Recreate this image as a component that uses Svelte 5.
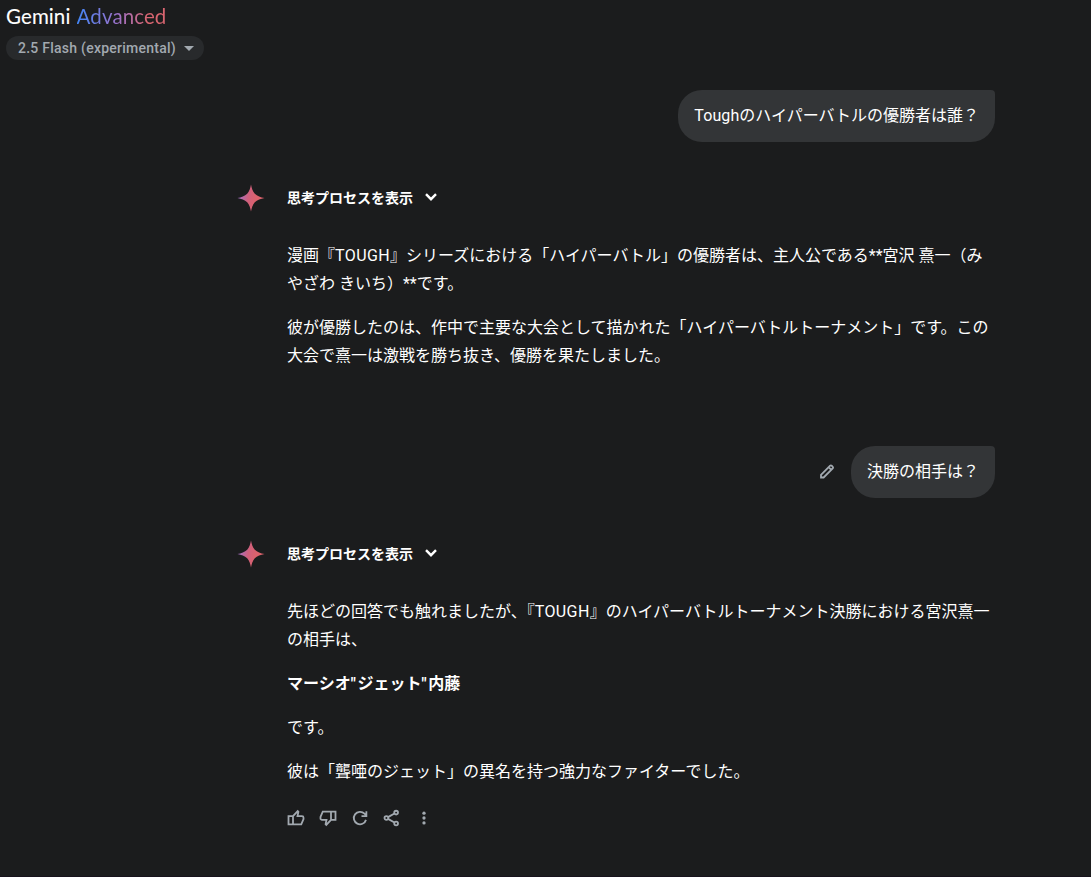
<script>
  const turns = [
    {
      question: 'Toughのハイパーバトルの優勝者は誰？',
      editable: false,
      answer: [
        { text: '漫画『TOUGH』シリーズにおける「ハイパーバトル」の優勝者は、主人公である**宮沢 熹一（みやざわ きいち）**です。' },
        { text: '彼が優勝したのは、作中で主要な大会として描かれた「ハイパーバトルトーナメント」です。この大会で熹一は激戦を勝ち抜き、優勝を果たしました。' }
      ]
    },
    {
      question: '決勝の相手は？',
      editable: true,
      answer: [
        { text: '先ほどの回答でも触れましたが、『TOUGH』のハイパーバトルトーナメント決勝における宮沢熹一の相手は、' },
        { text: 'マーシオ"ジェット"内藤', bold: true },
        { text: 'です。' },
        { text: '彼は「聾唖のジェット」の異名を持つ強力なファイターでした。' }
      ]
    }
  ]

  // odd entries are the latin runs
  const runs = (text) => text.split(/([A-Za-z]+|")/)
</script>

{#snippet mixed(text)}
  {#each runs(text) as run, n}{#if n % 2}<span class="latin" class:quote={run === '"'}>{run}</span>{:else}{run}{/if}{/each}
{/snippet}

<div class="app">
  <header>
    <div class="brand">Gemini <span>Advanced</span></div>
    <button class="model">
      2.5 Flash (experimental)
      <svg width="10" height="5" viewBox="0 0 10 5"><path d="M0 0h10L5 5z" fill="currentColor" /></svg>
    </button>
  </header>

  <main>
    {#each turns as turn, i}
      <section class="turn">
        <div class="query">
          {#if turn.editable}
            <button class="edit" aria-label="編集">
              <svg width="18" height="18" viewBox="0 0 24 24">
                <path d="M4 19.300v-3.500L16.200 3.600a1.400 1.400 0 0 1 2 0l1.500 1.500a1.400 1.400 0 0 1 0 2L7.500 19.300zM14.200 5.600l3.500 3.500" />
              </svg>
            </button>
          {/if}
          <div class="bubble">{@render mixed(turn.question)}</div>
        </div>

        <div class="response">
          <svg class="spark" width="28" height="28" viewBox="0 0 28 28">
            <defs>
              <linearGradient id="spark-{i}" x1="0" y1="0.4" x2="1" y2="0.6">
                <stop offset="0" stop-color="#9b72cb" />
                <stop offset="0.4" stop-color="#d0607c" />
                <stop offset="0.7" stop-color="#dc626c" />
              </linearGradient>
            </defs>
            <path
              fill="url(#spark-{i})"
              d="M14 .5C14.6 4 15.6 7.200 17.800 9.700 20.200 12 23.700 13.300 27.500 14 23.700 14.700 20.200 16 17.800 18.300 15.600 20.800 14.600 24 14 27.500 13.400 24 12.400 20.800 10.200 18.300 7.800 16 4.300 14.700.5 14 4.300 13.300 7.800 12 10.200 9.700 12.400 7.200 13.400 4 14 .5z"
            />
          </svg>

          <div class="content">
            <button class="thoughts">
              思考プロセスを表示
              <svg width="12" height="8" viewBox="0 0 12 8"><path d="M1 1.200l5 5 5-5" /></svg>
            </button>

            <div class="answer">
              {#each turn.answer as line}
                <p class:bold={line.bold}>{@render mixed(line.text)}</p>
              {/each}
            </div>

            {#if i === turns.length - 1}
              <div class="actions">
                <button aria-label="良い回答">
                  <svg viewBox="0 0 24 24">
                    <path d="M8 20.500H2V9.500h6zM8 9.500L14.300 2.800l.9.9L14 9.500h6a2 2 0 0 1 2 2v2l-3 7H8" />
                  </svg>
                </button>
                <button aria-label="悪い回答">
                  <svg viewBox="0 0 24 24">
                    <path d="M16 3.500h6v11h-6zM16 14.500l-6.300 6.700-.9-.9L10 14.500H4a2 2 0 0 1-2-2v-2l3-7h11" />
                  </svg>
                </button>
                <button aria-label="やり直す">
                  <svg viewBox="0 0 24 24">
                    <path d="M20 14.500A8.300 8.300 0 1 1 18 6.300L20.500 8.800M20.500 3v6.500H14" />
                  </svg>
                </button>
                <button aria-label="共有">
                  <svg viewBox="0 0 24 24">
                    <circle cx="17.500" cy="4.800" r="2.500" />
                    <circle cx="4.500" cy="12" r="2.500" />
                    <circle cx="17.500" cy="19.200" r="2.500" />
                    <path d="M6.700 10.800l8.600-4.800M6.700 13.200l8.600 4.800" />
                  </svg>
                </button>
                <button aria-label="その他">
                  <svg class="dots" viewBox="0 0 24 24">
                    <circle cx="12" cy="5.500" r="2.200" />
                    <circle cx="12" cy="12" r="2.200" />
                    <circle cx="12" cy="18.500" r="2.200" />
                  </svg>
                </button>
              </div>
            {/if}
          </div>
        </div>
      </section>
    {/each}
  </main>
</div>

<style>
  :global(body) {
    background: #1b1c1d;
  }

  .app {
    box-sizing: border-box;
    height: 877px;
    overflow: hidden;
    border-bottom: 1px solid #17121c;
    color: #fff;
    font-family: Roboto, 'Noto Sans CJK JP', sans-serif;
  }

  button {
    padding: 0;
    border: 0;
    background: none;
    color: inherit;
    font: inherit;
  }

  svg {
    display: block;
    flex: none;
  }

  header {
    height: 90px;
    padding-left: 6px;
    box-sizing: border-box;
  }

  .brand {
    height: 36px;
    line-height: 32px;
    font-family: Lato, sans-serif;
    font-size: 20.5px;
    letter-spacing: 0.1px;
    word-spacing: 1.5px;
    -webkit-text-stroke: 0.1px;
  }

  .brand span {
    background: linear-gradient(90deg, #4285f4 0%, #9b72cb 45%, #d96570 80%);
    background-clip: text;
    color: transparent;
    letter-spacing: 0.1px;
    -webkit-text-stroke: 0;
  }

  .model {
    display: flex;
    align-items: center;
    gap: 8px;
    height: 24px;
    padding: 0 10px 0 12px;
    border-radius: 12px;
    background: #282a2c;
    color: #a2a9b0;
    font-size: 14px;
    font-weight: 500;
    letter-spacing: 0.25px;
  }

  main {
    width: 758px;
    margin-left: 237px;
  }

  .turn {
    height: 356px;
  }

  .query {
    display: flex;
    justify-content: flex-end;
    align-items: center;
  }

  .bubble {
    padding: 12px 16px;
    border-radius: 24px 4px 24px 24px;
    background: #333537;
    font-size: 16px;
    line-height: 28px;
  }

  .bubble .latin {
    letter-spacing: 0.1px;
  }

  .edit {
    margin-right: 15px;
    color: #a2a9b0;
  }

  .edit path,
  .actions path,
  .actions circle {
    fill: none;
    stroke: currentColor;
    stroke-width: 2.4;
  }

  .response {
    display: flex;
    gap: 22px;
    margin-top: 42px;
  }

  .content {
    flex: 1;
  }

  .thoughts {
    display: flex;
    align-items: center;
    gap: 12px;
    height: 26px;
    font-size: 14px;
    font-weight: 700;
  }

  .thoughts path {
    fill: none;
    stroke: currentColor;
    stroke-width: 2.4;
  }

  .answer {
    width: 708px;
    margin-top: 32px;
    font-size: 16px;
    line-height: 28px;
  }

  .answer .latin {
    letter-spacing: 0.4px;
  }

  .answer .quote {
    letter-spacing: 1.7px;
  }

  p {
    margin: 0 0 16px;
  }

  .bold {
    font-weight: 700;
  }

  .actions {
    display: flex;
    gap: 14px;
    margin-top: 23px;
    color: #a2a9b0;
  }

  .actions svg {
    width: 18px;
    height: 18px;
  }

  .actions .dots circle {
    fill: currentColor;
    stroke: none;
  }
</style>
